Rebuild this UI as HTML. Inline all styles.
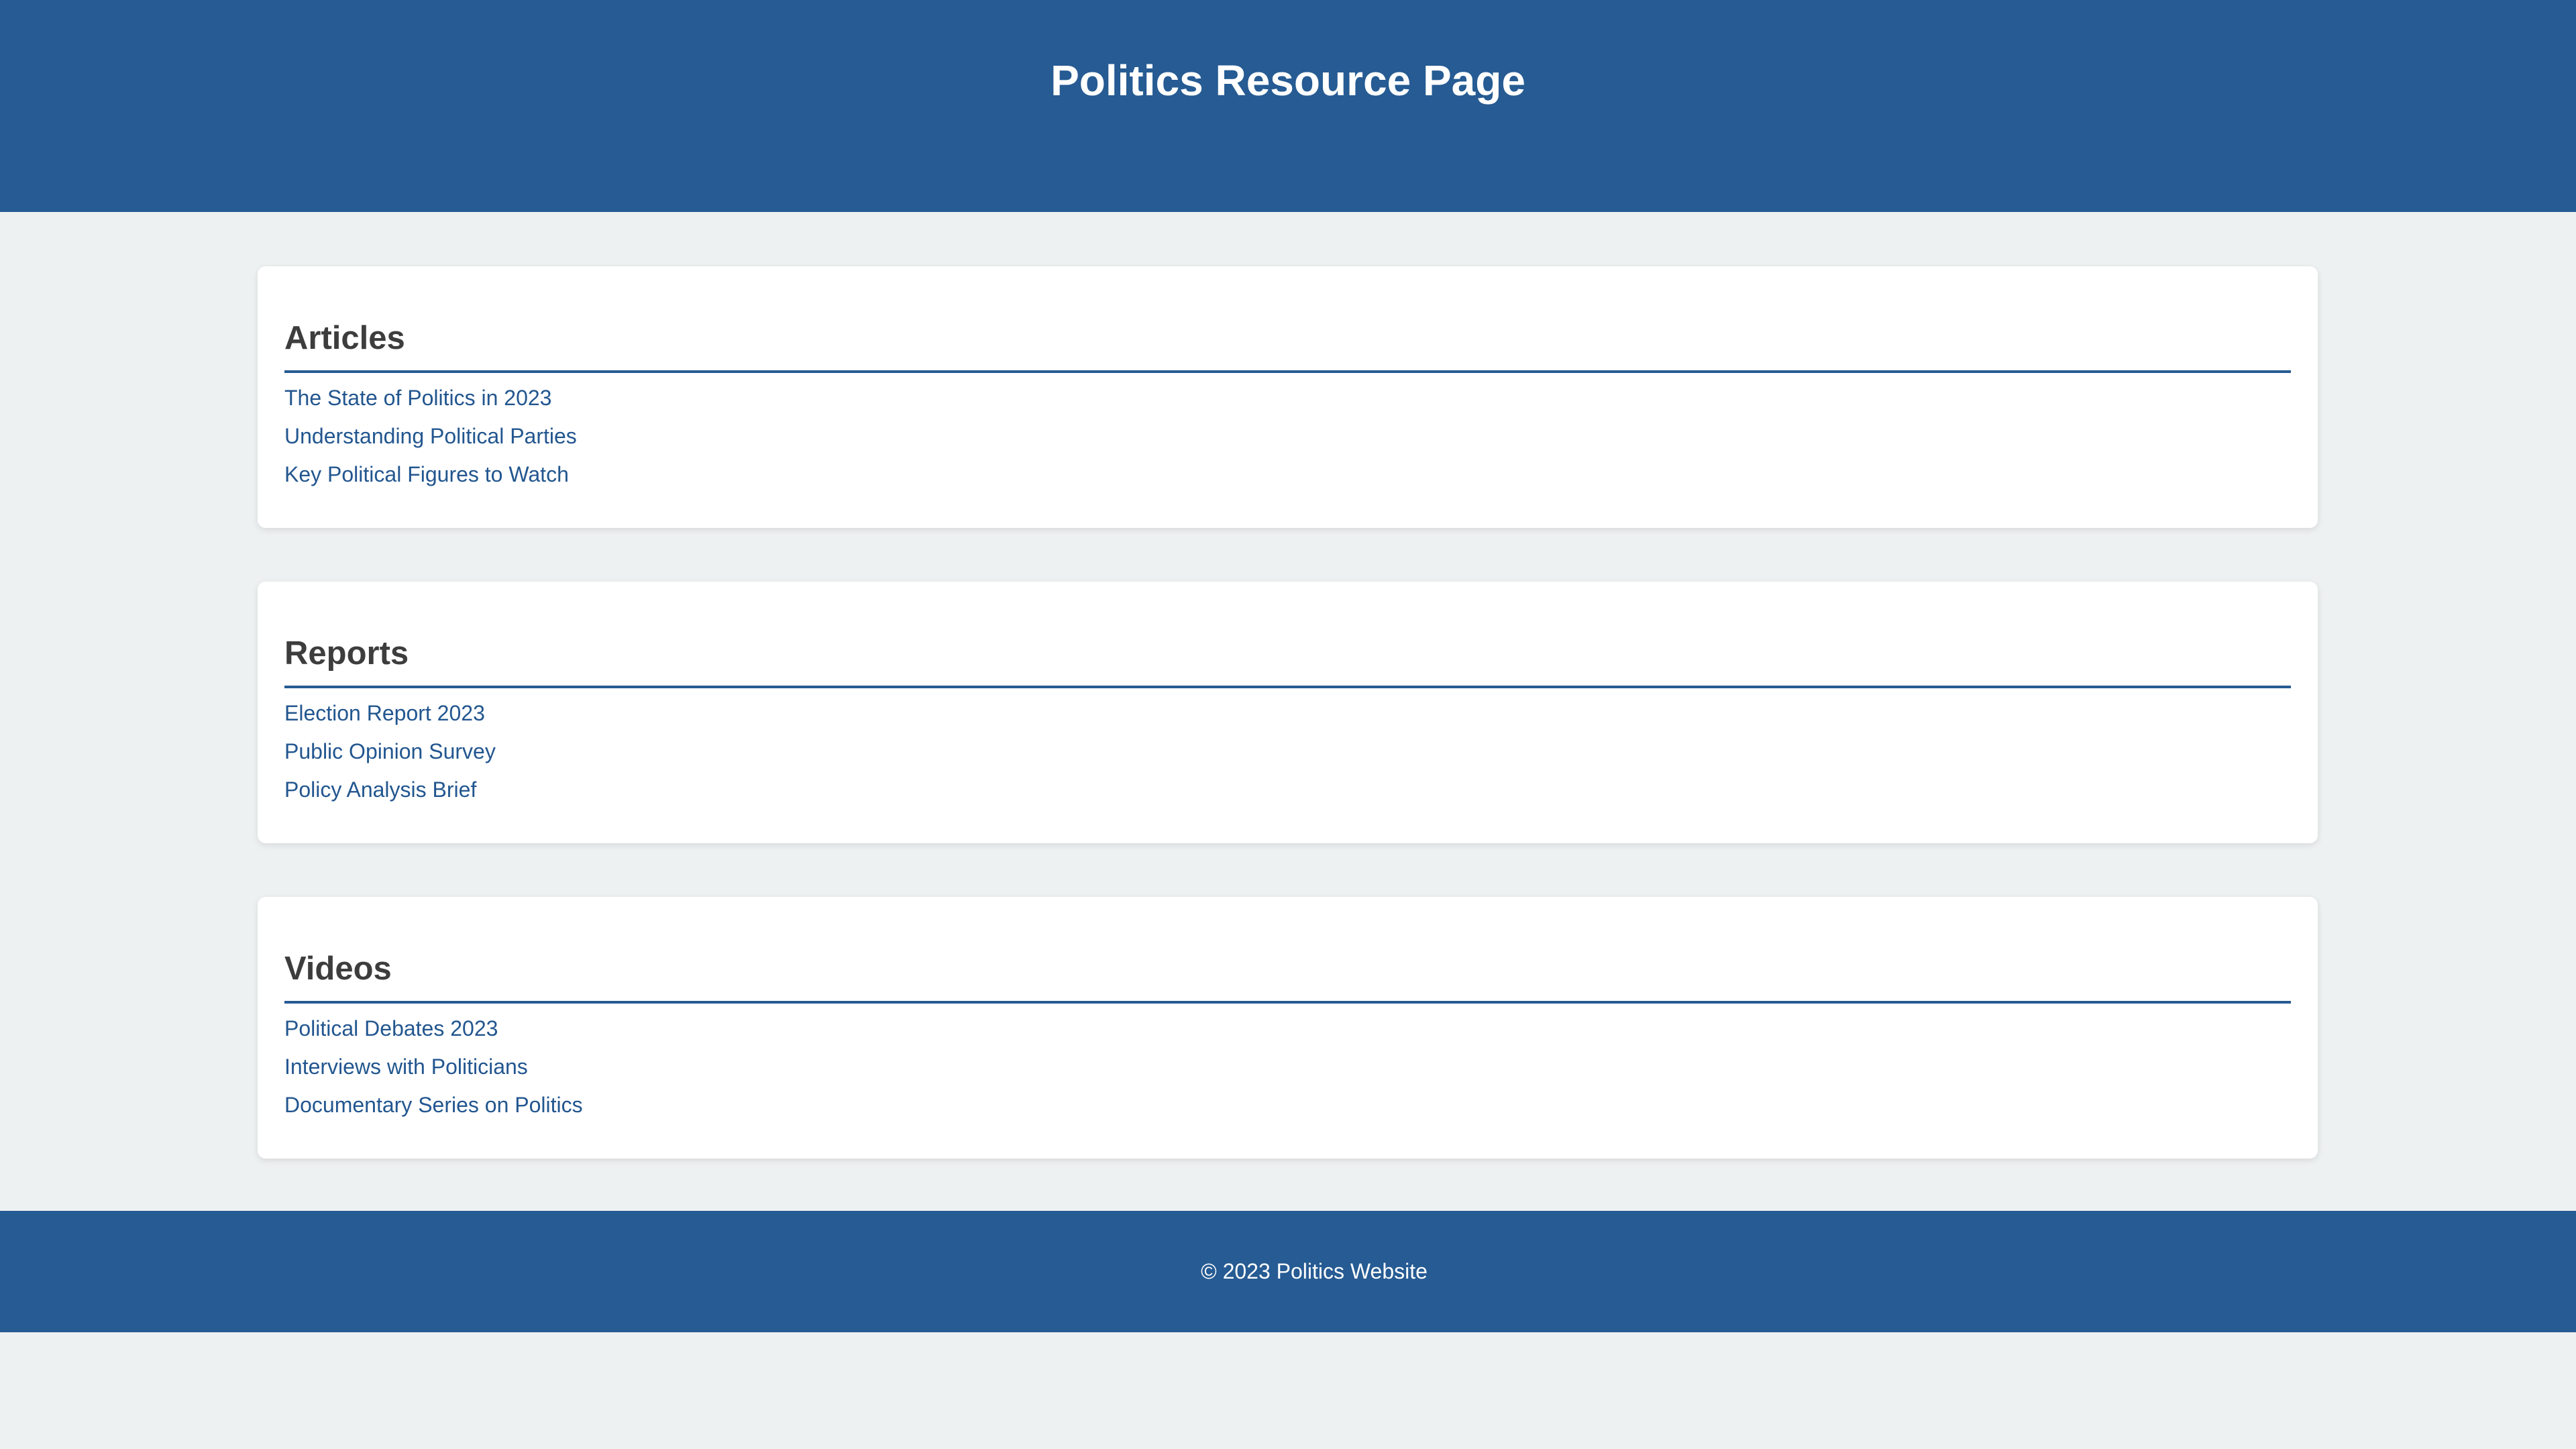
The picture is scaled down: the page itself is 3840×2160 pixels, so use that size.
<!DOCTYPE html>
<html><head><meta charset="utf-8"><style>
*{margin:0;padding:0;box-sizing:border-box}
html,body{width:3840px;height:2160px;background:#eef1f2;font-family:"Liberation Sans",Arial,sans-serif;overflow:hidden;position:relative}
.hdr{position:absolute;left:0;top:0;width:3840px;height:316px;background:#265b93}
.hdr h1{position:absolute;left:0;width:3840px;top:80px;text-align:center;color:#fff;font-size:64px;line-height:80px;font-weight:bold}
.card{position:absolute;left:384px;width:3071px;height:390px;background:#fff;border-radius:12px;box-shadow:0 3px 10px rgba(0,0,0,0.1)}
.card h2{position:absolute;left:40px;top:77px;font-size:49px;line-height:60px;color:#3d3d3d;font-weight:bold}
.card .ln{position:absolute;left:40px;right:40px;top:155px;height:4px;background:#265b93}
.card a{position:absolute;left:40px;font-size:32px;line-height:40px;color:#22568f;text-decoration:none}
.ftr{position:absolute;left:0;top:1805px;width:3840px;height:181px;background:#265b93;color:#fff;text-align:center;font-size:32px;line-height:181px;padding-left:78px}
</style></head><body>
<div class="hdr"><h1>Politics Resource Page</h1></div>
<div class="card" style="top:397px"><h2>Articles</h2><div class="ln"></div>
<a style="top:176px">The State of Politics in 2023</a>
<a style="top:233px">Understanding Political Parties</a>
<a style="top:290px">Key Political Figures to Watch</a></div>
<div class="card" style="top:867px"><h2>Reports</h2><div class="ln"></div>
<a style="top:176px">Election Report 2023</a>
<a style="top:233px">Public Opinion Survey</a>
<a style="top:290px">Policy Analysis Brief</a></div>
<div class="card" style="top:1337px"><h2>Videos</h2><div class="ln"></div>
<a style="top:176px">Political Debates 2023</a>
<a style="top:233px">Interviews with Politicians</a>
<a style="top:290px">Documentary Series on Politics</a></div>
<div class="ftr">© 2023 Politics Website</div>
</body></html>
